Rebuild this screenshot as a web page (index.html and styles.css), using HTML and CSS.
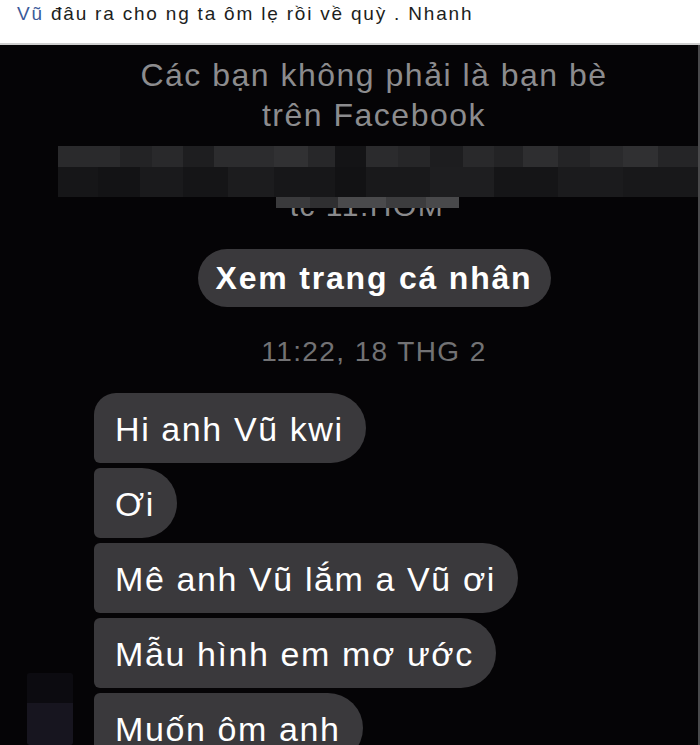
FILE: index.html
```html
<!DOCTYPE html>
<html lang="vi">
<head>
<meta charset="utf-8">
<title>Chat</title>
<link rel="stylesheet" href="styles.css">
</head>
<body>
<div class="post">
  <p class="post-text"><span class="mention">Vũ</span> đâu ra cho ng ta ôm lẹ rồi về quỳ . Nhanh</p>
</div>
<div class="shot">
  <div class="notice">
    <p>Các bạn không phải là bạn bè</p>
    <p>trên Facebook</p>
  </div>
  <div class="mosaic">
    <div class="mosaic-row row-a"></div>
    <div class="mosaic-row row-b"></div>
  </div>
  <div class="mosaic-tail"></div>
  <div class="cut-line"><span>tc 11:HOM</span></div>
  <div class="profile-btn">Xem trang cá nhân</div>
  <div class="stamp">11:22, 18 THG 2</div>
  <div class="thread">
    <div class="avatar-col"><div class="avatar"></div></div>
    <div class="bubbles">
      <div class="bubble first">Hi anh Vũ kwi</div>
      <div class="bubble">Ơi</div>
      <div class="bubble">Mê anh Vũ lắm a Vũ ơi</div>
      <div class="bubble">Mẫu hình em mơ ước</div>
      <div class="bubble">Muốn ôm anh</div>
    </div>
  </div>
</div>
</body>
</html>
```
FILE: styles.css
```css
html, body {
  margin: 0;
  padding: 0;
  background: #050406;
}
body {
  width: 700px;
  height: 745px;
  overflow: hidden;
  font-family: "Liberation Sans", Arial, sans-serif;
}
.post {
  background: #ffffff;
  height: 43px;
  border-bottom: 2px solid #cfcfcf;
  box-sizing: content-box;
}
.post-text {
  margin: 0;
  padding: 3px 0 0 17px;
  font-size: 19px;
  line-height: 22px;
  letter-spacing: 1.8px;
  color: #1c1e21;
  white-space: nowrap;
}
.mention { color: #3b5a9a; }

.shot {
  background: #050406;
  display: flex;
  flex-direction: column;
  align-items: center;
  height: 700px;
  overflow: hidden;
  padding-left: 50px;
  border-right: 2px solid #4a4a4c;
  box-sizing: border-box;
}
.shot > * { flex-shrink: 0; }
.notice {
  padding-top: 10px;
  text-align: center;
  color: #8c8c8e;
  font-size: 32px;
  letter-spacing: 1.5px;
  line-height: 40px;
}
.notice p { margin: 0; }

.mosaic {
  align-self: stretch;
  margin: 11px 0 0 8px;
  display: flex;
  flex-direction: column;
}
.mosaic-row { height: 21px; flex-shrink: 0; }
.row-a {
  background: linear-gradient(90deg,
    #2a2a2c 0 62px, #232325 62px 94px, #29292b 94px 125px, #1e1e20 125px 156px,
    #2c2c2e 156px 216px, #313133 216px 250px, #272729 250px 277px, #141416 277px 308px,
    #2b2b2d 308px 340px, #262628 340px 372px, #1d1d1f 372px 405px, #29292b 405px 436px,
    #232325 436px 465px, #2e2e30 465px 500px, #242426 500px 532px, #2a2a2c 532px 565px,
    #303032 565px 600px, #252527 600px);
}
.row-b {
  height: 30px;
  background: linear-gradient(90deg,
    #161618 0 40px, #131315 40px 82px, #1a1a1c 82px 125px, #151517 125px 170px,
    #1c1c1e 170px 216px, #171719 216px 277px, #121214 277px 308px, #19191b 308px 372px,
    #1e1e20 372px 436px, #151517 436px 500px, #1b1b1d 500px 565px, #18181a 565px);
}
.mosaic-tail {
  width: 183px;
  height: 11px;
  margin-left: -14px;
  background: linear-gradient(90deg,
    #3a3a3c 0 34px, #2f2f31 34px 62px, #4a4a4c 62px 110px, #3c3c3e 110px 150px, #49494b 150px);
}
.cut-line {
  height: 10px;
  overflow: hidden;
  margin-left: -14px;
}
.cut-line span {
  display: block;
  margin-top: -17px;
  font-size: 30px;
  line-height: 30px;
  letter-spacing: 1.5px;
  color: #8a8a8c;
}

.profile-btn {
  margin-top: 31px;
  height: 58px;
  width: 353px;
  box-sizing: border-box;
  border-radius: 29px;
  background: #3a393c;
  color: #ffffff;
  font-weight: 700;
  font-size: 32px;
  letter-spacing: 1.8px;
  line-height: 58px;
  text-align: center;
}
.stamp {
  margin-top: 30px;
  color: #727274;
  font-size: 28px;
  line-height: 30px;
  letter-spacing: 1.4px;
}

.thread {
  align-self: stretch;
  margin-top: 26px;
  margin-left: -50px;
  display: flex;
}
.avatar-col {
  width: 94px;
  display: flex;
  flex-direction: column;
  justify-content: flex-end;
  padding-left: 27px;
  box-sizing: border-box;
}
.avatar {
  width: 46px;
  height: 72px;
  margin-bottom: 18px;
  background: linear-gradient(180deg, #0c0b10 0 30px, #17151f 30px);
  border-radius: 3px;
}
.bubbles {
  display: flex;
  flex-direction: column;
  align-items: flex-start;
  gap: 5px;
}
.bubble {
  flex-shrink: 0;
  height: 70px;
  line-height: 72px;
  padding: 0 22px 0 21px;
  background: #3a393c;
  color: #ffffff;
  font-size: 34px;
  letter-spacing: 1.6px;
  white-space: nowrap;
  border-radius: 6px 35px 35px 6px;
}
.bubble.first {
  border-top-left-radius: 22px;
}
```
